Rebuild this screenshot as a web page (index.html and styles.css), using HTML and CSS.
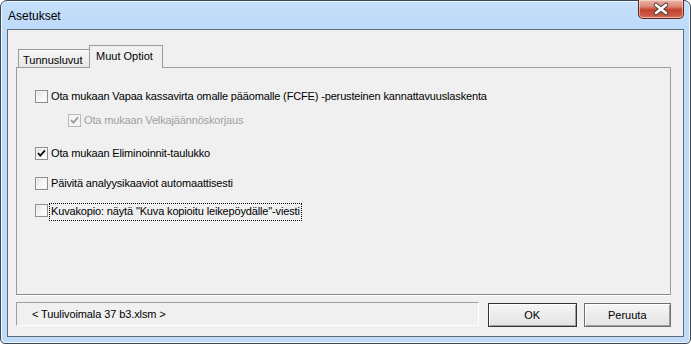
FILE: index.html
```html
<!DOCTYPE html>
<html>
<head>
<meta charset="utf-8">
<link rel="stylesheet" href="styles.css">
</head>
<body>
<div class="window">
  <div class="titlebar"><span class="title">Asetukset</span></div>
  <div class="close">
    <svg width="44" height="18" viewBox="0 0 44 18">
      <path d="M17 5 L27 13 M27 5 L17 13" stroke="#4a3a36" stroke-width="4.6" stroke-linecap="round"/>
      <path d="M17 5 L27 13 M27 5 L17 13" stroke="#ffffff" stroke-width="2.6" stroke-linecap="round"/>
    </svg>
  </div>
  <div class="client">
    <div class="tabs">
      <div class="tab">Tunnusluvut</div>
      <div class="tab active">Muut Optiot</div>
    </div>
    <div class="panel">
      <div class="row r1"><span class="cb"></span><span class="lbl">Ota mukaan Vapaa kassavirta omalle pääomalle (FCFE) -perusteinen kannattavuuslaskenta</span></div>
      <div class="row r2 indent disabled"><span class="cb checked"><svg width="11" height="11" viewBox="0 0 11 11"><path d="M2 5 L4.3 7.6 L9 2.4" fill="none" stroke="#9a9a9a" stroke-width="1.8"/></svg></span><span class="lbl">Ota mukaan Velkajäännöskorjaus</span></div>
      <div class="row r3"><span class="cb checked"><svg width="11" height="11" viewBox="0 0 11 11"><path d="M2 5 L4.3 7.6 L9 2.4" fill="none" stroke="#111" stroke-width="1.8"/></svg></span><span class="lbl">Ota mukaan Eliminoinnit-taulukko</span></div>
      <div class="row r4"><span class="cb"></span><span class="lbl">Päivitä analyysikaaviot automaattisesti</span></div>
      <div class="row r5"><span class="cb"></span><span class="lbl focus">Kuvakopio: näytä "Kuva kopioitu leikepöydälle"-viesti</span></div>
    </div>
    <div class="footer">
      <div class="status">&lt; Tuulivoimala 37 b3.xlsm &gt;</div>
      <button class="btn default">OK</button>
      <button class="btn">Peruuta</button>
    </div>
  </div>
</div>
</body>
</html>
```

FILE: styles.css
```css
html, body {
  margin: 0;
  padding: 0;
  background: #ffffff;
}
body {
  width: 691px;
  height: 344px;
  font-family: "Liberation Sans", Arial, sans-serif;
  font-size: 11px;
  color: #000;
}
.window {
  position: relative;
  box-sizing: border-box;
  width: 691px;
  height: 344px;
  border: 1px solid #3b4856;
  border-radius: 7px 7px 5px 5px;
  background: #bfdbf8;
  box-shadow: inset 0 0 0 1px rgba(255,255,255,0.75);
  padding: 0 6px 6px 6px;
  display: flex;
  flex-direction: column;
}
.titlebar {
  height: 27px;
  display: flex;
  align-items: center;
  background: linear-gradient(#c6e0fb, #bddaf9);
  margin: 1px -5px 0 -5px;
  padding-left: 6px;
  border-radius: 6px 6px 0 0;
  box-sizing: border-box;
}
.title {
  font-size: 12px;
  color: #000;
  margin-top: 2px;
}
.close {
  position: absolute;
  top: -1px;
  right: 6px;
  width: 44px;
  height: 18px;
  border: 1px solid #5b2a22;
  border-top: none;
  border-radius: 0 0 5px 5px;
  background: linear-gradient(#eab3a6 0%, #dc8b78 35%, #c5412c 55%, #cc5844 85%, #d97a63 100%);
  box-shadow: inset 0 0 0 1px rgba(255,230,220,0.55);
  display: flex;
}
.client {
  height: 309px;
  box-sizing: border-box;
  border: 1px solid #5f6c7a;
  background: #f0f0f0;
  padding: 15px 12px 0 8px;
  display: flex;
  flex-direction: column;
}
.tabs {
  height: 22px;
  display: flex;
  align-items: flex-end;
  padding-left: 2px;
  position: relative;
  z-index: 1;
}
.tab {
  box-sizing: border-box;
  height: 18px;
  width: 71px;
  border: 1px solid #9c9c9c;
  border-bottom: none;
  border-right: none;
  background: linear-gradient(#f7f7f7, #e8e8e8);
  padding: 4px 0 0 4px;
  line-height: 13px;
  color: #000;
}
.tab.active {
  height: 23px;
  width: 74px;
  margin-bottom: -1px;
  border-right: 1px solid #9c9c9c;
  background: #f0f0f0;
  padding: 4px 0 0 6px;
}
.panel {
  height: 228px;
  box-sizing: border-box;
  border: 1px solid #9c9c9c;
  border-bottom-color: #8a8a8a;
  box-shadow: 0 1px 0 #ffffff;
  background: #f0f0f0;
  padding: 22px 0 0 18px;
  letter-spacing: -0.15px;
}
.row {
  display: flex;
  align-items: center;
  height: 13px;
}
.r2 { margin-top: 11px; }
.r3 { margin-top: 20px; }
.r4 { margin-top: 17px; }
.r5 { margin-top: 14px; }
.indent { padding-left: 33px; }
.cb {
  box-sizing: border-box;
  width: 13px;
  height: 13px;
  flex: none;
  border: 1px solid #8e8f8f;
  background: linear-gradient(135deg, #dedede 0%, #f4f4f4 45%, #ffffff 100%);
  box-shadow: inset 0 0 0 1px #f4f4f4;
  display: flex;
  align-items: center;
  justify-content: center;
}
.cb svg { display: block; }
.disabled .cb {
  border-color: #b9b9b9;
  background: #f4f4f4;
}
.disabled .lbl { color: #a0a0a0; }
.lbl {
  margin-left: 2px;
  padding: 0 1px;
  line-height: 16px;
  white-space: nowrap;
}
.focus {
  outline: 1px dotted #000;
  outline-offset: 0;
  margin-top: 3px;
  padding-bottom: 1px;
  line-height: 15px;
}
.footer {
  margin-top: 7px;
  display: flex;
  align-items: flex-start;
}
.status {
  box-sizing: border-box;
  height: 24px;
  width: 463px;
  flex: none;
  border: 1px solid;
  border-color: #a0a0a0 #ffffff #ffffff #a0a0a0;
  padding: 0 0 0 15px;
  line-height: 22px;
  margin-right: 9px;
  letter-spacing: -0.1px;
}
.btn {
  box-sizing: border-box;
  margin: 1px 0 0 0;
  width: 88px;
  height: 24px;
  font-family: "Liberation Sans", Arial, sans-serif;
  font-size: 11px;
  color: #000;
  border: 1px solid #707070;
  border-radius: 0;
  background: linear-gradient(#f6f6f6, #e3e3e3);
  box-shadow: inset 1px 1px 0 #ffffff, inset -1px -1px 0 #a0a0a0;
  padding: 0;
}
.btn.default {
  width: 89px;
  margin-right: 7px;
  border-color: #333;
}
```
